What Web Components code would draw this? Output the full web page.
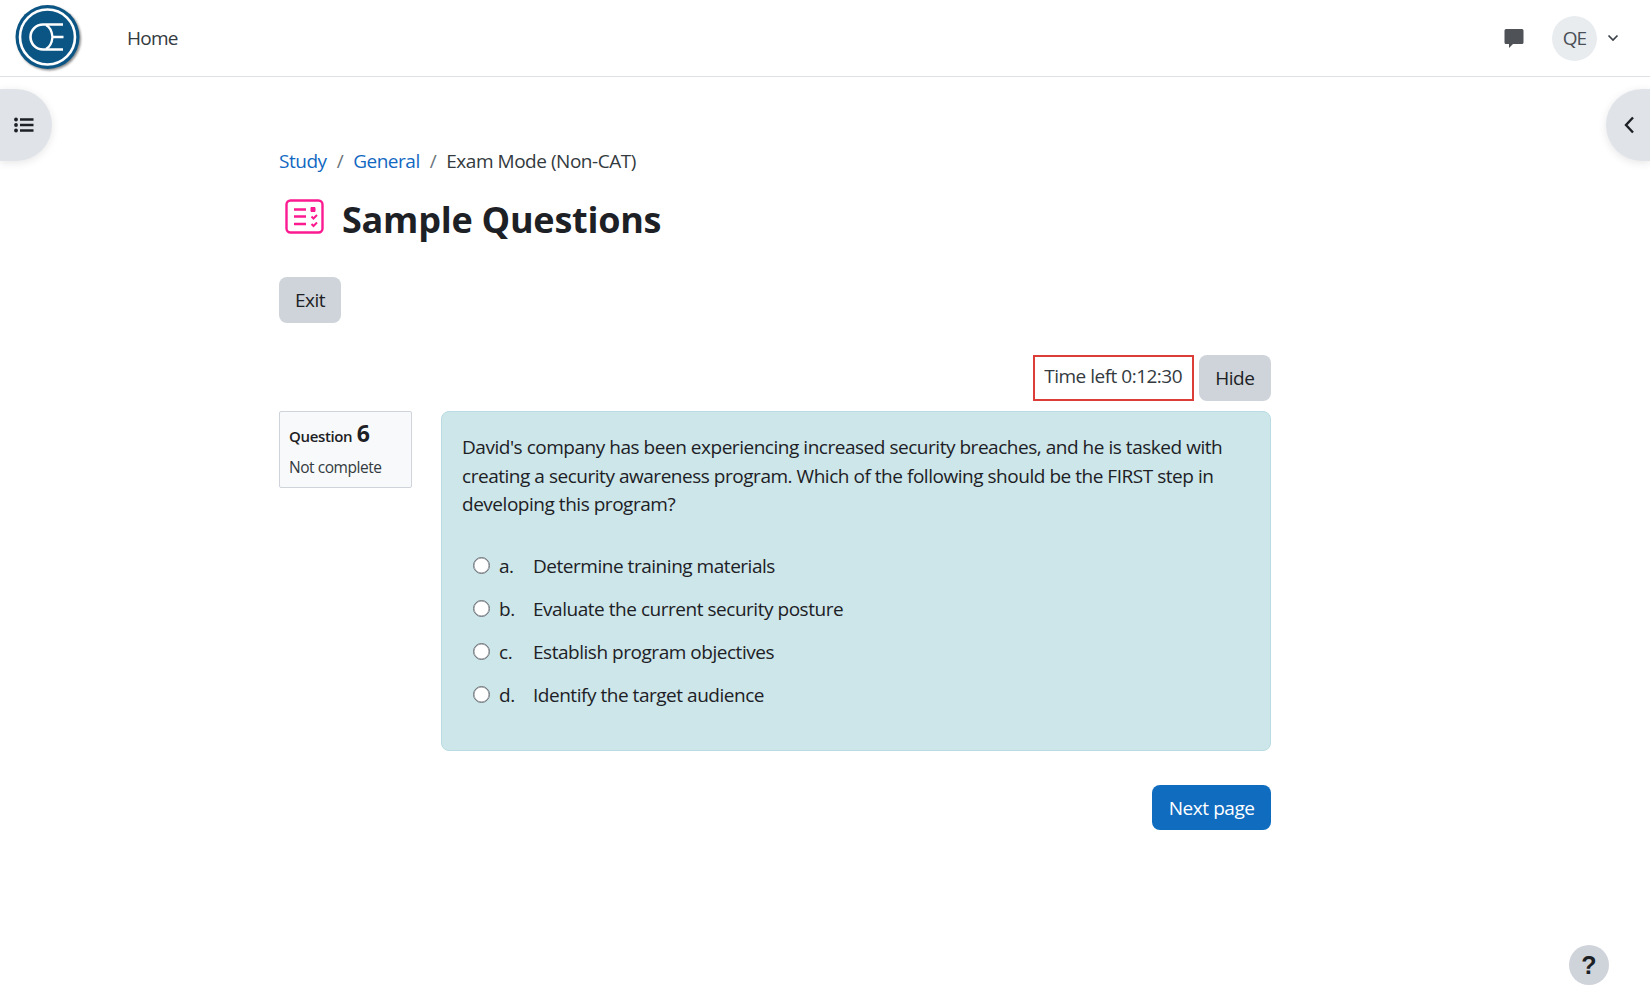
<!DOCTYPE html>
<html><head><meta charset="utf-8"><style>
html,body{margin:0;padding:0;background:#fff}
body{font-family:"Open Sans","Noto Sans",sans-serif;color:#1d2125;height:1000px;overflow:hidden}
</style></head><body>
<template id="t-header"><style>
:host{display:flex;align-items:center;height:76px;border-bottom:1px solid #dee2e6;box-sizing:content-box;padding-left:13px;padding-right:30px;font-size:19px}
.logo{width:70px;height:72px;display:block}
.home{margin-left:44px;color:#333a40;letter-spacing:-.75px}
.right{margin-left:auto;display:flex;align-items:center}
.msg{display:block;margin-right:27px}
.av{width:45px;height:45px;border-radius:50%;background:#e9ecef;display:flex;align-items:center;justify-content:center;color:#495057;font-size:19px;letter-spacing:-.8px}
.car{display:block;margin-left:10px;margin-right:1px}
</style>
<svg class="logo" viewBox="0 0 70 72"><defs><filter id="s" x="-10%" y="-10%" width="125%" height="125%"><feGaussianBlur stdDeviation="1.2"/></filter></defs>
<circle cx="36" cy="36.500" r="32" fill="#8a8a8a" filter="url(#s)"/><circle cx="34.500" cy="35" r="32" fill="#0b5585"/><circle cx="34.500" cy="35" r="27.500" fill="none" stroke="#fff" stroke-width="2.600"/>
<path d="M50 22.500H30a12.500 12.500 0 0 0 0 25H50" fill="none" stroke="#fff" stroke-width="2.600"/><path d="M33 23c4 2 6 7 6.500 12h11M33 47c4-2 6-7 6.500-12" fill="none" stroke="#fff" stroke-width="2.400"/></svg>
<span class="home">Home</span>
<div class="right"><svg class="msg" width="22" height="22" viewBox="0 0 22 22"><path d="M3 2h16a1.500 1.500 0 0 1 1.500 1.500v12a1.500 1.500 0 0 1-1.500 1.500h-9l-4 4v-4H3a1.500 1.500 0 0 1-1.500-1.500v-12A1.500 1.500 0 0 1 3 2z" fill="#4f5358"/></svg>
<div class="av">QE</div><svg class="car" width="12" height="8" viewBox="0 0 12 8"><path d="M1.500 1.500 6 6l4.500-4.500" fill="none" stroke="#3b4148" stroke-width="1.700"/></svg></div>
</template>
<template id="t-drawer"><style>
:host{position:absolute;top:89px;width:52px;height:72px;background:#e0e4e9;display:flex;align-items:center;box-shadow:0 2px 8px rgba(0,0,0,.1)}
:host([side=left]){left:0;border-radius:0 36px 36px 0;padding-left:14px;box-sizing:border-box}
:host([side=right]){right:0;width:44px;border-radius:36px 0 0 36px;padding-left:18px;box-sizing:border-box}
::slotted(svg){display:block}
</style><slot></slot></template>
<template id="t-crumbs"><style>
:host{display:flex;font-size:19px;line-height:26px;height:26px;color:#333a40;letter-spacing:-.47px}
a{color:#1268c2;text-decoration:none}.s{margin:0 10px;color:#6a737b}
</style><a>Study</a><span class="s">/</span><a>General</a><span class="s">/</span><span>Exam Mode (Non-CAT)</span></template>
<template id="t-title"><style>
:host{display:flex;align-items:center;height:50px;margin-top:21px}
svg{display:block;margin-left:6px;margin-right:18px;margin-top:-6px}
h1{margin:0;font-size:36px;font-weight:700;line-height:50px;letter-spacing:-.25px;color:#1d2125}
</style><svg width="39" height="36" viewBox="0 0 39 36" fill="none" stroke="#fb1a90" stroke-width="2.400"><rect x="1.500" y="1.500" width="36" height="32" rx="4"/><path d="M9 10.500h12M9 17.500h12M9 25h12" stroke-width="2.400"/><path d="M26 8.500h4v4h-4z" fill="#fb1a90" stroke-width="1"/><path d="M26.500 17.500l2 2 3.500-3.500M26.500 25l2 2 3.500-3.500" stroke-width="2"/></svg><h1><slot></slot></h1></template>
<template id="t-btn"><style>
:host{display:inline-flex;align-items:center;justify-content:center;height:46px;border-radius:8px;background:#ced4da;color:#1d2125;font-size:19px;padding:0 16px;box-sizing:border-box;letter-spacing:-.5px}
:host([wide]){padding:0 16.500px;letter-spacing:-.45px}
:host([primary]){background:#0f6cbf;color:#fff;height:45px;padding:0 16.500px;letter-spacing:-.45px}
</style><slot></slot></template>
<template id="t-timer"><style>
:host{display:flex;align-items:center;justify-content:center;width:161px;height:46px;box-sizing:border-box;border:2px solid #dc3e37;font-size:19px;color:#333a40;letter-spacing:-.5px;padding-bottom:5px;white-space:nowrap}
</style><slot></slot></template>
<template id="t-info"><style>
:host{display:block;width:133px;height:77px;box-sizing:border-box;background:#f8f9fa;border:1px solid #ced4da;border-radius:2px;padding:6px 9px;color:#333a40}
.q{font-size:15px;font-weight:600;line-height:30px;height:30px;letter-spacing:-.35px;color:#1d2125}
b{font-size:23px;font-weight:700;margin-left:1px;letter-spacing:0}
.n{font-size:15.500px;line-height:24px;margin-top:7px;letter-spacing:-.45px}
</style><div class="q">Question <b>6</b></div><div class="n">Not complete</div></template>
<template id="t-q"><style>
:host{display:block;width:830px;height:340px;box-sizing:border-box;background:#cce6ea;border:1px solid #b8dce2;border-radius:8px;padding:21px 20px 20px;color:#1d2125;font-size:19px;letter-spacing:-.47px}
p{margin:0 0 25.500px;line-height:28.500px}
</style><p><slot name="text"></slot></p><slot></slot></template>
<template id="t-opt"><style>
:host{display:flex;align-items:center;height:43px;padding-left:11px;color:#1d2125}
i{display:block;width:17px;height:17px;box-sizing:border-box;border:1px solid #6d7379;border-radius:50%;background:#fff;box-shadow:inset 0 0 0 .5px #8a8f94}
.l{width:34px;margin-left:9px}
</style><i></i><span class="l"><slot name="l"></slot></span><slot></slot></template>
<template id="t-help"><style>
:host{position:absolute;left:1569px;top:945px;width:40px;height:40px;border-radius:50%;background:#ced4da;display:flex;align-items:center;justify-content:center;font:700 25px "Liberation Sans",sans-serif;color:#1d2125}
</style><slot></slot></template>
<template id="t-page"><style>
:host{display:block;padding:0 0 0 279px;width:992px;font-size:19px}
.crumb{padding-top:71px;}
.act{margin-top:32px;display:flex}
.tm{display:flex;justify-content:flex-end;gap:5px;margin-top:32px}
.row{display:flex;gap:29px;margin-top:10px}
.nx{display:flex;justify-content:flex-end;margin-top:34px}
</style><div class="crumb"><slot name="crumbs"></slot></div><slot name="title"></slot><div class="act"><slot name="exit"></slot></div><div class="tm"><slot name="timer"></slot><slot name="hide"></slot></div><div class="row"><slot name="info"></slot><slot name="q"></slot></div><div class="nx"><slot name="next"></slot></div></template>
<qe-header></qe-header>
<qe-drawer side="left"><svg width="20" height="16" viewBox="0 0 20 16" fill="#1d2125"><circle cx="2" cy="2.500" r="1.900"/><circle cx="2" cy="8" r="1.900"/><circle cx="2" cy="13.500" r="1.900"/><path d="M6 1.300h13.500v2.400H6zM6 6.800h13.500v2.400H6zM6 12.300h13.500v2.400H6z"/></svg></qe-drawer>
<qe-drawer side="right"><svg width="11" height="18" viewBox="0 0 11 18"><path d="M9 1.500 2 9l7 7.500" fill="none" stroke="#1d2125" stroke-width="2.400"/></svg></qe-drawer>
<qe-page>
<qe-crumbs slot="crumbs"></qe-crumbs>
<qe-title slot="title">Sample Questions</qe-title>
<qe-btn slot="exit">Exit</qe-btn>
<qe-timer slot="timer">Time left 0:12:30</qe-timer>
<qe-btn slot="hide" wide>Hide</qe-btn>
<qe-info slot="info"></qe-info>
<qe-q slot="q"><span slot="text">David's company has been experiencing increased security breaches, and he is tasked with creating a security awareness program. Which of the following should be the FIRST step in developing this program?</span>
<qe-opt><span slot="l">a.</span>Determine training materials</qe-opt>
<qe-opt><span slot="l">b.</span>Evaluate the current security posture</qe-opt>
<qe-opt><span slot="l">c.</span>Establish program objectives</qe-opt>
<qe-opt><span slot="l">d.</span>Identify the target audience</qe-opt></qe-q>
<qe-btn slot="next" primary>Next page</qe-btn>
</qe-page>
<qe-help>?</qe-help>
<script>
const map={'qe-header':'t-header','qe-drawer':'t-drawer','qe-crumbs':'t-crumbs','qe-title':'t-title','qe-btn':'t-btn','qe-timer':'t-timer','qe-info':'t-info','qe-q':'t-q','qe-opt':'t-opt','qe-help':'t-help','qe-page':'t-page'};
for(const [n,t] of Object.entries(map)){customElements.define(n,class extends HTMLElement{constructor(){super();this.attachShadow({mode:'open'}).appendChild(document.getElementById(t).content.cloneNode(true))}})}
</script>
</body></html>
